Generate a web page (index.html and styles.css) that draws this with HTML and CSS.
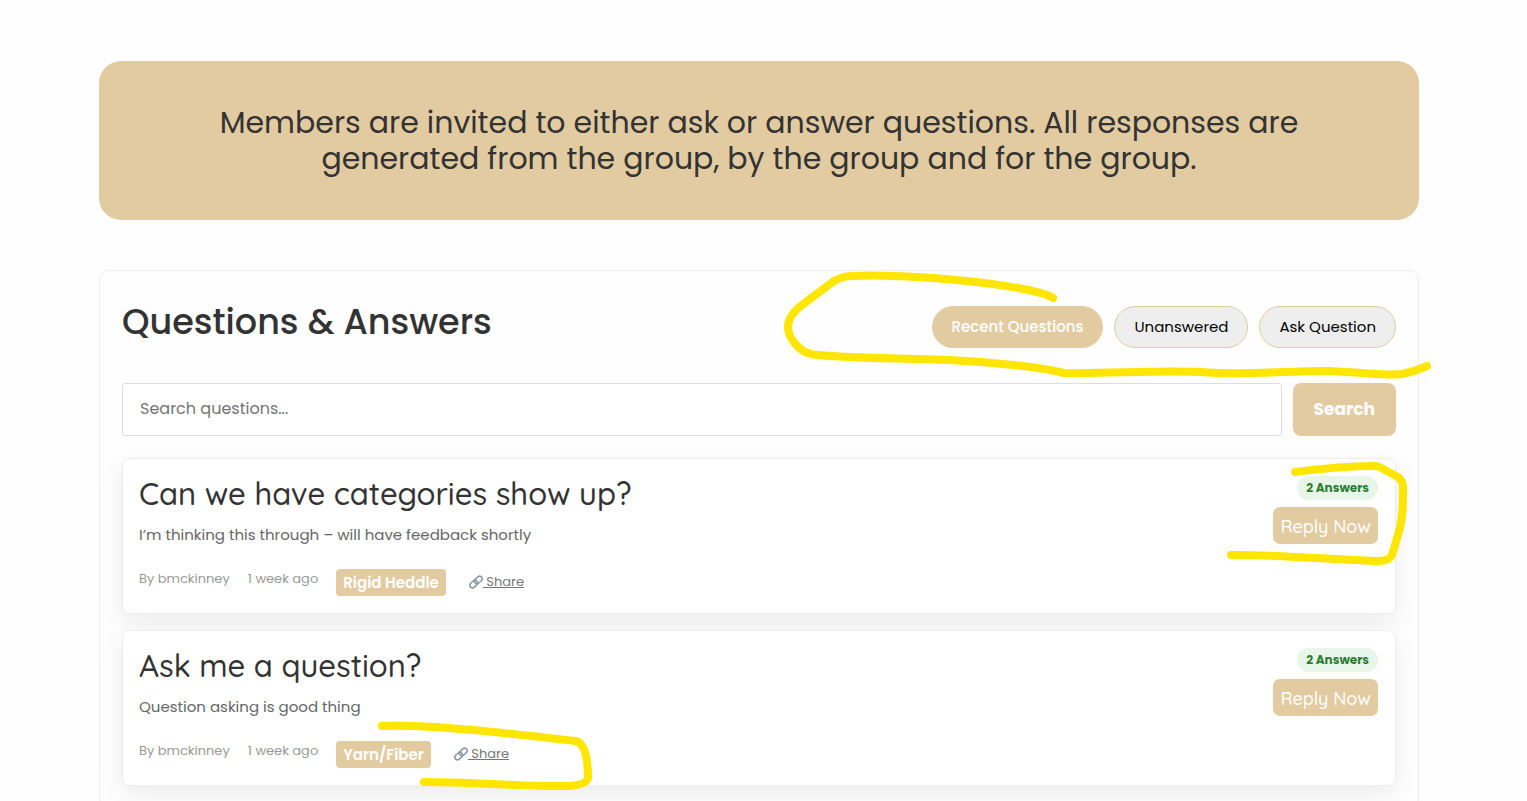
FILE: index.html
```
<!DOCTYPE html>
<html lang="en">
<head>
  <meta charset="UTF-8">
  <meta name="viewport" content="width=device-width, initial-scale=1.0">
  <title>Questions &amp; Answers</title>
  <link rel="stylesheet" href="styles.css">
</head>
<body>

  <main class="page">
    <section class="intro">
      <p>Members are invited to either ask or answer questions. All responses are generated from the group, by the group and for the group.</p>
    </section>

    <section class="qa">
      <header class="qa-header">
        <h2>Questions &amp; Answers</h2>
        <nav class="qa-tabs">
          <button type="button" class="tab active">Recent Questions</button>
          <button type="button" class="tab">Unanswered</button>
          <button type="button" class="tab">Ask Question</button>
        </nav>
      </header>

      <form class="qa-search">
        <input type="text" placeholder="Search questions..." aria-label="Search questions">
        <button type="submit">Search</button>
      </form>

      <article class="question">
        <div class="question-body">
          <h3>Can we have categories show up?</h3>
          <p>I’m thinking this through – will have feedback shortly</p>
          <div class="meta">
            <span>By bmckinney</span>
            <span>1 week ago</span>
            <span class="category">Rigid Heddle</span>
            <a href="#" class="share">
              <svg viewBox="0 0 14 14" aria-hidden="true">
                <g transform="rotate(-42 7 7)">
                  <rect x="-0.4" y="4.4" width="8.6" height="5.2" rx="2.6"/>
                  <rect x="5.8" y="4.4" width="8.6" height="5.2" rx="2.6"/>
                </g>
              </svg><span>&nbsp;Share</span></a>
          </div>
        </div>
        <div class="question-side">
          <span class="count">2 Answers</span>
          <button type="button" class="reply">Reply Now</button>
        </div>
      </article>

      <article class="question">
        <div class="question-body">
          <h3>Ask me a question?</h3>
          <p>Question asking is good thing</p>
          <div class="meta">
            <span>By bmckinney</span>
            <span>1 week ago</span>
            <span class="category">Yarn/Fiber</span>
            <a href="#" class="share">
              <svg viewBox="0 0 14 14" aria-hidden="true">
                <g transform="rotate(-42 7 7)">
                  <rect x="-0.4" y="4.4" width="8.6" height="5.2" rx="2.6"/>
                  <rect x="5.8" y="4.4" width="8.6" height="5.2" rx="2.6"/>
                </g>
              </svg><span>&nbsp;Share</span></a>
          </div>
        </div>
        <div class="question-side">
          <span class="count">2 Answers</span>
          <button type="button" class="reply">Reply Now</button>
        </div>
      </article>
    </section>

    <!-- yellow marker lines -->
    <svg class="marker" viewBox="99 61 1320 740" aria-hidden="true">
      <path d="M1053 298C1042 290 985 282 945 279C912 276 872 275 853 276C844 276 839 278 834 281L802 305C794 311 788 318 788 327C788 337 798 351 811 354C830 358 900 358 950 360C990 362 1040 367 1064 373C1110 374 1150 370 1200 372C1255 376 1290 370 1330 371C1370 373 1387 376 1402 374C1413 372 1420 369 1427 366"/>
      <path d="M1295 472C1325 468 1350 466 1375 466C1378 466 1380 467 1383 469L1398 477C1402 480 1403 483 1403 488C1403 505 1403 520 1398 535L1392 555C1390 560 1385 561 1378 561C1350 561 1275 554 1231 555"/>
      <path d="M382 726C430 724 515 734 576 741C580 742 583 746 585 752C588 762 588 770 588 778C587 783 580 785 570 786C530 787 475 782 424 782"/>
    </svg>
  </main>

</body>
</html>
```
FILE: styles.css
```
* {
  box-sizing: border-box;
}
body {
  margin: 0 9px 0 0;
  background-color: #fefefe;
  color: #333;
  font-family: Poppins, Inter, sans-serif;
  overflow-x: hidden;
}
h2, h3, p {
  margin: 0;
}
button, input {
  font-family: inherit;
}
button {
  cursor: pointer;
}
.page {
  position: relative;
  max-width: 1320px;
  margin: 61px auto 0;
}

.intro {
  padding: 44px 100px 43px;
  border-radius: 22px;
  background-color: #e2cba1;
  font-size: 30px;
  line-height: 36px;
  text-align: center;
}

.qa {
  margin-top: 50px;
  padding: 22px;
  border: 1px solid #eee;
  border-radius: 10px;
}
.qa-header {
  display: flex;
  justify-content: space-between;
  align-items: flex-start;
  margin-bottom: 32px;
}
.qa-header h2 {
  font-size: 35px;
  font-weight: 500;
  line-height: 58px;
}
.qa-tabs {
  display: flex;
  gap: 11px;
  padding-top: 13px;
}
.tab {
  height: 42px;
  padding: 0 19px 2px;
  border: 1px solid #e2cba1;
  border-radius: 21px;
  background-color: #eee;
  color: #000;
  font-size: 15px;
}
.tab.active {
  background-color: #e2cba1;
  color: #fff;
  font-weight: 500;
}

.qa-search {
  display: flex;
  gap: 11px;
  margin-bottom: 22px;
}
.qa-search input {
  flex: 1;
  height: 53px;
  padding: 0 17px 3px;
  border: 1px solid #ddd;
  border-radius: 3px;
  background-color: #fff;
  font-size: 16px;
}
.qa-search input::placeholder {
  color: #757575;
}
.qa-search button {
  padding: 0 21px 2px;
  border: 0;
  border-radius: 8px;
  background-color: #e2cba1;
  color: #fff;
  font-size: 17px;
  font-weight: 700;
}

.question {
  display: flex;
  justify-content: space-between;
  padding: 17px 17px 17px 16px;
  border: 1px solid #eee;
  border-radius: 8px;
  background-color: #fff;
  box-shadow: 0 8px 24px rgba(0, 0, 0, 0.08);
}
.question + .question {
  margin-top: 16px;
}
.question h3 {
  font-family: Quicksand, Inter, sans-serif;
  font-size: 31px;
  font-weight: 500;
  line-height: 36px;
}
.question p {
  margin-top: 10px;
  color: #666;
  font-size: 15px;
  line-height: 26px;
}
.meta {
  display: flex;
  align-items: flex-start;
  gap: 18px;
  margin-top: 21px;
  color: #999;
  font-size: 13px;
  line-height: 20px;
}
.category {
  padding: 0 7px;
  border-radius: 4px;
  background-color: #e2cba1;
  color: #fff;
  font-size: 15px;
  font-weight: 600;
  line-height: 27px;
}
.share {
  display: flex;
  align-items: center;
  margin-left: 5px;
  color: #777;
  line-height: 25px;
  text-decoration: none;
}
.share span {
  text-decoration: underline;
}
.share svg {
  width: 14px;
  height: 14px;
  fill: none;
  stroke: #8899a6;
  stroke-width: 1.6;
}

.question-side {
  display: flex;
  flex-direction: column;
  align-items: flex-end;
  gap: 7px;
}
.count {
  padding: 0 9px;
  border-radius: 12px;
  background-color: #e8f5e9;
  color: #2e7d32;
  font-size: 12px;
  font-weight: 700;
  line-height: 24px;
}
.reply {
  height: 37px;
  padding: 2px 7px 0;
  border: 0;
  border-radius: 7px;
  background-color: #e2cba1;
  color: #fff;
  font-family: Quicksand, Inter, sans-serif;
  font-size: 18px;
  font-weight: 500;
}

.marker {
  position: absolute;
  top: 0;
  left: 0;
  width: 100%;
  overflow: visible;
  pointer-events: none;
  fill: none;
  stroke: #ffe600;
  stroke-width: 8;
  stroke-linecap: round;
  stroke-linejoin: round;
}
```
